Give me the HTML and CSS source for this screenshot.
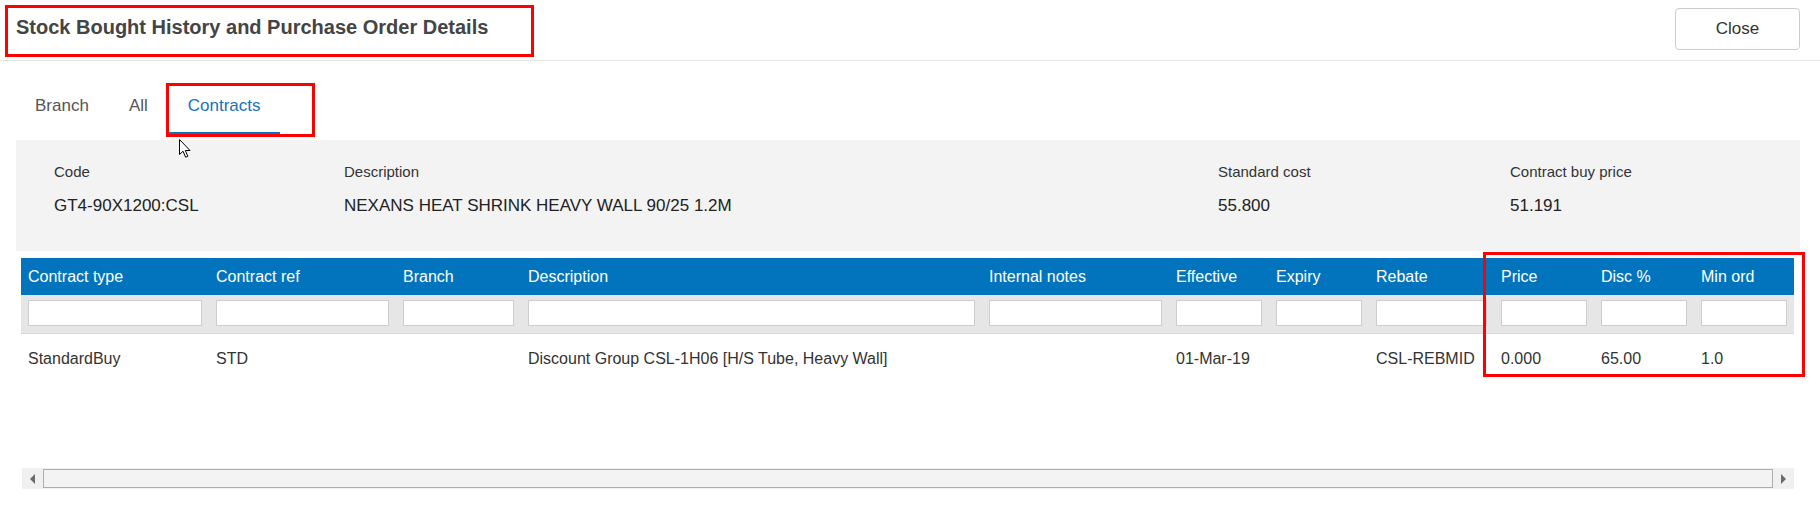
FILE: index.html
```html
<!DOCTYPE html>
<html>
<head>
<meta charset="utf-8">
<title>Stock Bought History</title>
<link rel="stylesheet" href="styles.css">
</head>
<body>
<div class="page">
  <header class="hdr">
    <h1 class="title">Stock Bought History and Purchase Order Details</h1>
    <button class="close">Close</button>
  </header>

  <nav class="tabs">
    <a class="tab">Branch</a>
    <a class="tab">All</a>
    <a class="tab active">Contracts</a>
  </nav>

  <section class="summary">
    <div class="field"><div class="lbl">Code</div><div class="val">GT4-90X1200:CSL</div></div>
    <div class="field"><div class="lbl">Description</div><div class="val">NEXANS HEAT SHRINK HEAVY WALL 90/25 1.2M</div></div>
    <div class="field"><div class="lbl">Standard cost</div><div class="val">55.800</div></div>
    <div class="field"><div class="lbl">Contract buy price</div><div class="val">51.191</div></div>
  </section>

  <div class="grid-wrap">
    <table class="grid">
      <colgroup>
        <col class="w188"><col class="w187"><col class="w125"><col class="w461"><col class="w187">
        <col class="w100"><col class="w100"><col class="w125"><col class="w100"><col class="w100"><col class="w100">
      </colgroup>
      <thead>
        <tr class="head">
          <th>Contract type</th><th>Contract ref</th><th>Branch</th><th>Description</th><th>Internal notes</th>
          <th>Effective</th><th>Expiry</th><th>Rebate</th><th>Price</th><th>Disc %</th><th>Min ord</th>
        </tr>
        <tr class="filters">
          <td><input type="text"></td><td><input type="text"></td><td><input type="text"></td><td><input type="text"></td>
          <td><input type="text"></td><td><input type="text"></td><td><input type="text"></td><td><input type="text"></td>
          <td><input type="text"></td><td><input type="text"></td><td><input type="text"></td>
        </tr>
      </thead>
      <tbody>
        <tr class="row">
          <td>StandardBuy</td><td>STD</td><td></td><td>Discount Group CSL-1H06 [H/S Tube, Heavy Wall]</td><td></td>
          <td>01-Mar-19</td><td></td><td>CSL-REBMID</td><td>0.000</td><td>65.00</td><td>1.0</td>
        </tr>
      </tbody>
    </table>
  </div>

  <div class="hscroll">
    <div class="sbtn"><span class="tri-left"></span></div>
    <div class="thumb"></div>
    <div class="sbtn"><span class="tri-right"></span></div>
  </div>

  <div class="mark mark-title"></div>
  <div class="mark mark-tab"></div>
  <div class="mark mark-cols"></div>

  <svg class="cursor" width="13" height="20" viewBox="0 0 13 20">
    <path d="M0.5 0.5 L0.5 15.5 L4 12.2 L6.6 18.2 L8.8 17.3 L6.3 11.5 L11 11.5 Z" fill="#fff" stroke="#000" stroke-width="1" stroke-linejoin="miter"/>
  </svg>
</div>
</body>
</html>
```

FILE: styles.css
```css
* { box-sizing: border-box; }

html, body {
  margin: 0;
  padding: 0;
  background: #fff;
}

body {
  font-family: "Liberation Sans", Arial, sans-serif;
  color: #333;
}

.page {
  position: relative;
  width: 1820px;
  height: 506px;
  overflow: hidden;
}

/* Header */
.hdr {
  display: flex;
  justify-content: space-between;
  align-items: flex-start;
  height: 61px;
  padding: 0 20px 0 16px;
  border-bottom: 1px solid #e5e5e5;
}

.title {
  margin: 15px 0 0;
  font-size: 20px;
  line-height: 24px;
  font-weight: bold;
  color: #444;
}

.close {
  margin-top: 8px;
  width: 125px;
  height: 42px;
  background: #fff;
  border: 1px solid #ccc;
  border-radius: 4px;
  font-family: "Liberation Sans", Arial, sans-serif;
  font-size: 17px;
  color: #333;
  padding: 0;
}

/* Tabs */
.tabs {
  display: flex;
  padding: 20px 0 0 16px;
}

.tab {
  display: block;
  padding: 15px 19px 16px;
  margin-right: 2px;
  font-size: 17px;
  line-height: 20px;
  color: #555;
  border-bottom: 3px solid transparent;
}

.tab.active {
  color: #1a72bb;
  border-bottom-color: #0a74c0;
}

/* Summary panel */
.summary {
  display: grid;
  grid-template-columns: 290px 874px 292px 1fr;
  margin: 5px 20px 0 16px;
  height: 111px;
  padding: 23px 0 0 38px;
  background: #f3f3f3;
}

.lbl {
  font-size: 15px;
  line-height: 18px;
  color: #333;
}

.val {
  margin-top: 15px;
  font-size: 17px;
  line-height: 20px;
  color: #222;
}

/* Grid */
.grid-wrap {
  height: 210px;
  margin-top: 7px;
  padding-left: 21px;
}

.grid {
  width: 1773px;
  table-layout: fixed;
  border-collapse: collapse;
  border-spacing: 0;
  font-size: 16px;
}

.w188 { width: 188px; }
.w187 { width: 187px; }
.w125 { width: 125px; }
.w461 { width: 461px; }
.w100 { width: 100px; }

.head th {
  background: #0274bd;
  color: #fff;
  font-weight: normal;
  text-align: left;
  height: 37px;
  line-height: 37px;
  padding: 0 7px;
  white-space: nowrap;
}

.filters td {
  background: #e6e6e6;
  padding: 5px 7px 7px;
  border-bottom: 1px solid #d9d9d9;
}

.filters input {
  display: block;
  width: 100%;
  height: 26px;
  border: 1px solid #cdcdcd;
  background: #fff;
  margin: 0;
  padding: 0 4px;
}

.row td {
  padding: 15px 7px;
  line-height: 20px;
  color: #333;
  white-space: nowrap;
}

/* Horizontal scrollbar */
.hscroll {
  display: flex;
  margin-left: 22px;
  width: 1772px;
  height: 21px;
  background: #f0f0f0;
}

.sbtn {
  width: 21px;
  height: 21px;
  display: flex;
  align-items: center;
  justify-content: center;
  background: #f0f0f0;
}

.thumb {
  flex: 1;
  margin: 1px 0;
  background: #f3f3f3;
  border: 1px solid #adadad;
}

.tri-left {
  width: 0;
  height: 0;
  border-top: 5px solid transparent;
  border-bottom: 5px solid transparent;
  border-right: 5px solid #6b6b6b;
}

.tri-right {
  width: 0;
  height: 0;
  border-top: 5px solid transparent;
  border-bottom: 5px solid transparent;
  border-left: 5px solid #6b6b6b;
}

/* Annotation overlays */
.mark {
  position: absolute;
  border: 3px solid #ff0000;
}

.mark-title {
  left: 5px;
  top: 5px;
  width: 529px;
  height: 52px;
}

.mark-tab {
  left: 166px;
  top: 83px;
  width: 149px;
  height: 54px;
}

.mark-cols {
  left: 1483px;
  top: 252px;
  width: 322px;
  height: 125px;
}

.cursor {
  position: absolute;
  left: 179px;
  top: 139px;
}
```
